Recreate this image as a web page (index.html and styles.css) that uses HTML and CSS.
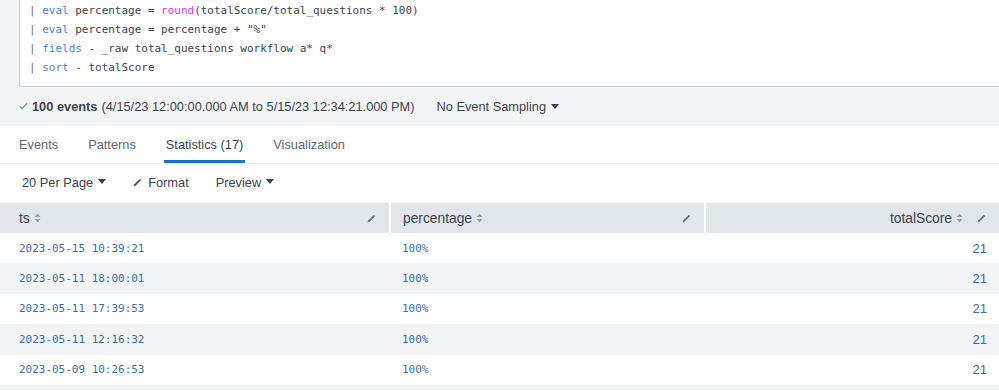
FILE: index.html
```html
<!DOCTYPE html>
<html lang="en">
<head>
    <meta charset="UTF-8">
    <title>Search | Statistics</title>
    <link rel="stylesheet" href="styles.css">
</head>
<body>
    <div class="editor">
        <div class="line"><span class="pipe">|</span> <span class="kw">eval</span> percentage = <span class="fn">round</span>(totalScore/total_questions * 100)</div>
        <div class="line"><span class="pipe">|</span> <span class="kw">eval</span> percentage = percentage + "%"</div>
        <div class="line"><span class="pipe">|</span> <span class="kw">fields</span> - _raw total_questions workflow a* q*</div>
        <div class="line"><span class="pipe">|</span> <span class="kw">sort</span> - totalScore</div>
    </div>

    <div class="status">
        <svg class="check" width="9" height="8" viewBox="0 0 9 8"><path d="M0.8 4.4 L3.2 6.8 L8.2 0.8" fill="none" stroke="#5cb85c" stroke-width="1.3"/></svg>
        <span class="count">100 events</span>
        <span class="range">(4/15/23 12:00:00.000 AM to 5/15/23 12:34:21.000 PM)</span>
        <span class="sampling">No Event Sampling <span class="caret"></span></span>
    </div>

    <div class="tabs">
        <a class="tab">Events</a>
        <a class="tab">Patterns</a>
        <a class="tab active">Statistics (17)</a>
        <a class="tab">Visualization</a>
    </div>

    <div class="toolbar">
        <span class="tool">20 Per Page <span class="caret"></span></span>
        <span class="tool"><svg class="pen" width="9" height="9" viewBox="0 0 9 9"><path d="M0.6 8.4 L1.2 6.6 L6.9 0.9 L8.1 2.1 L2.4 7.8 Z" fill="#3c444d"/></svg>Format</span>
        <span class="tool">Preview <span class="caret"></span></span>
    </div>

    <table class="results">
        <thead>
            <tr>
                <th class="c1"><div class="th"><span>ts <svg class="sort" width="7" height="10" viewBox="0 0 7 10"><path d="M3.5 0.5 L6.5 4 L0.5 4 Z M3.5 9.5 L6.5 6 L0.5 6 Z" fill="#9aa4ad"/></svg></span><svg class="pen" width="9" height="9" viewBox="0 0 9 9"><path d="M0.6 8.4 L1.2 6.6 L6.9 0.9 L8.1 2.1 L2.4 7.8 Z" fill="#5c6773"/></svg></div></th>
                <th class="c2"><div class="th"><span>percentage <svg class="sort" width="7" height="10" viewBox="0 0 7 10"><path d="M3.5 0.5 L6.5 4 L0.5 4 Z M3.5 9.5 L6.5 6 L0.5 6 Z" fill="#9aa4ad"/></svg></span><svg class="pen" width="9" height="9" viewBox="0 0 9 9"><path d="M0.6 8.4 L1.2 6.6 L6.9 0.9 L8.1 2.1 L2.4 7.8 Z" fill="#5c6773"/></svg></div></th>
                <th class="c3"><div class="th right"><span>totalScore <svg class="sort" width="7" height="10" viewBox="0 0 7 10"><path d="M3.5 0.5 L6.5 4 L0.5 4 Z M3.5 9.5 L6.5 6 L0.5 6 Z" fill="#9aa4ad"/></svg></span><svg class="pen" width="9" height="9" viewBox="0 0 9 9"><path d="M0.6 8.4 L1.2 6.6 L6.9 0.9 L8.1 2.1 L2.4 7.8 Z" fill="#5c6773"/></svg></div></th>
            </tr>
        </thead>
        <tbody>
            <tr><td class="c1">2023-05-15 10:39:21</td><td class="c2">100%</td><td class="c3 num">21</td></tr>
            <tr><td class="c1">2023-05-11 18:00:01</td><td class="c2">100%</td><td class="c3 num">21</td></tr>
            <tr><td class="c1">2023-05-11 17:39:53</td><td class="c2">100%</td><td class="c3 num">21</td></tr>
            <tr><td class="c1">2023-05-11 12:16:32</td><td class="c2">100%</td><td class="c3 num">21</td></tr>
            <tr><td class="c1">2023-05-09 10:26:53</td><td class="c2">100%</td><td class="c3 num">21</td></tr>
        </tbody>
    </table>
</body>
</html>
```

FILE: styles.css
```css
* {
    margin: 0;
    padding: 0;
    box-sizing: border-box;
}
body {
    background-color: #f2f4f5;
    color: #3c444d;
    font-family: "Liberation Sans", Arial, sans-serif;
    font-size: 13px;
    overflow: hidden;
}
/* search editor */
.editor {
    margin-left: 19px;
    background: #fff;
    border-left: 1px solid #c3cbd4;
    border-bottom: 1px solid #c3cbd4;
    border-bottom-left-radius: 3px;
    padding: 1px 0 10px 9px;
    height: 87px;
    font-family: "DejaVu Sans Mono", monospace;
    font-size: 10.97px;
    color: #3c444d;
}
.line {
    height: 19px;
    line-height: 19px;
    white-space: pre;
}
.pipe { color: #6b7480; }
.kw { color: #4a7fe0; }
.fn { color: #e02fe0; }

/* job status */
.status {
    display: flex;
    align-items: center;
    height: 39px;
    padding-left: 19px;
    padding-bottom: 1px;
    font-size: 12.8px;
}
.check { margin-right: 4px; }
.count { font-weight: bold; margin-right: 4px; }
.sampling { margin-left: 22px; }
.caret {
    display: inline-block;
    width: 0;
    height: 0;
    border-left: 4px solid transparent;
    border-right: 4px solid transparent;
    border-top: 5px solid #3c444d;
    vertical-align: middle;
    margin-left: 1px;
    position: relative;
    top: -1px;
}

/* tabs */
.tabs {
    display: flex;
    gap: 30px;
    background: #fff;
    height: 38px;
    padding-left: 19px;
    border-bottom: 1px solid #e8ebee;
}
.tab {
    display: flex;
    align-items: center;
    color: #5c6773;
    font-size: 12.8px;
    padding: 2px 0 0;
    border-bottom: 3px solid transparent;
    height: 37px;
}
.tab.active {
    color: #3c444d;
    border-bottom-color: #1a73c0;
    margin: 0 -2px;
    padding: 2px 2px 0;
}

/* results toolbar */
.toolbar {
    display: flex;
    align-items: center;
    gap: 27px;
    background: #fff;
    height: 39px;
    padding-left: 22px;
    padding-bottom: 3px;
    font-size: 12.8px;
}
.tool { display: flex; align-items: center; gap: 4px; }
.tool .pen { margin-right: 2px; }

/* results table */
.results {
    width: 100%;
    border-collapse: collapse;
    table-layout: fixed;
    background: #fff;
}
.results th {
    background: #e1e6eb;
    height: 30px;
    font-weight: normal;
    text-align: left;
    font-size: 13.8px;
    border-left: 2px solid #fff;
}
.results th:first-child { border-left: none; }
.c1 { width: 390px; }
.c2 { width: 315px; }
.th {
    display: flex;
    align-items: center;
    justify-content: space-between;
    padding: 0 13px 0 12px;
}
.c1 .th { padding-left: 19px; }
.th.right { justify-content: flex-end; gap: 14px; }
.th span { display: flex; align-items: center; gap: 4px; }
.results td {
    height: 30.4px;
    font-family: "DejaVu Sans Mono", monospace;
    font-size: 10.97px;
    color: #3a6fa8;
    padding-left: 12px;
}
.results td.c1 { padding-left: 19px; }
.results td.num {
    text-align: right;
    padding-right: 12px;
    font-family: "Liberation Sans", Arial, sans-serif;
    font-size: 13px;
}
.results tbody tr:nth-child(even) td { background: #f2f4f5; }
```
